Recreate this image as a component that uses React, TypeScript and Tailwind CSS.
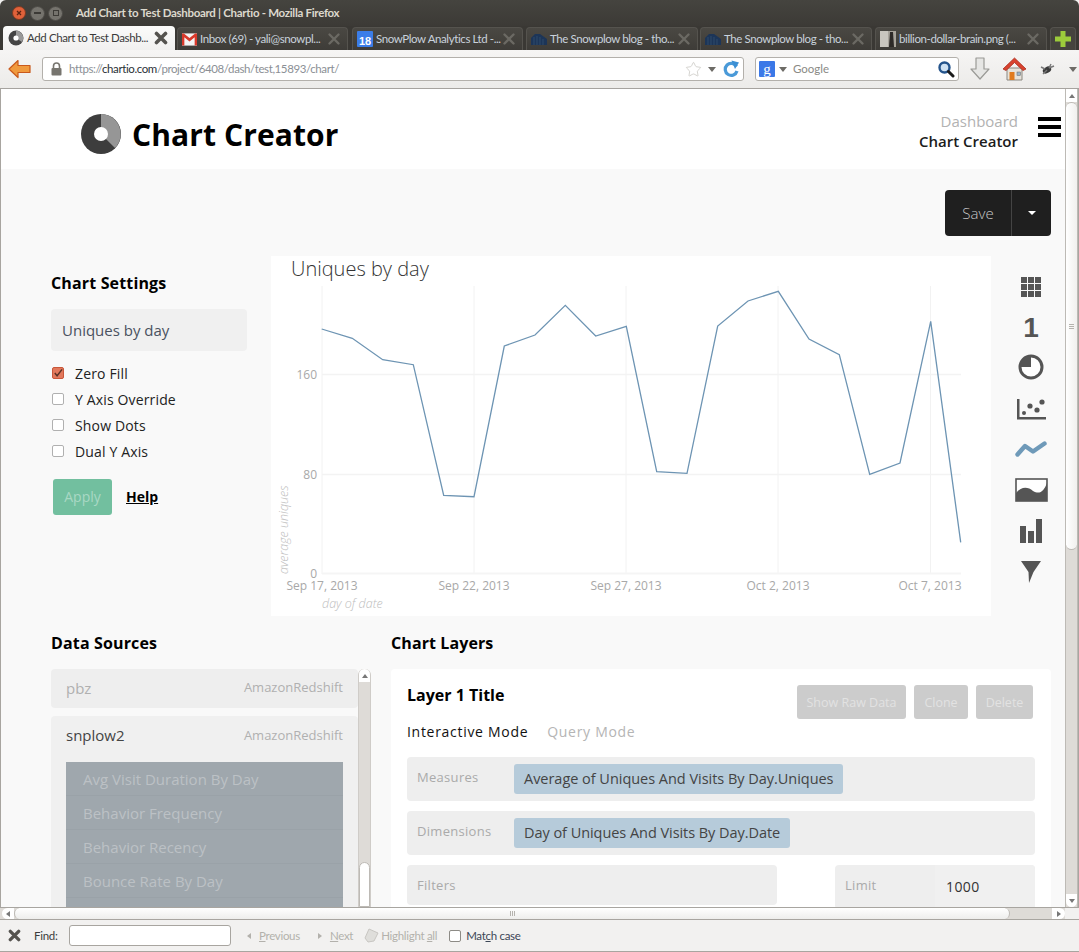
import { Star } from "lucide-react";

const points = [
  [321.7, 329], [352.3, 338.3], [382.7, 359.7], [413.3, 364.7], [443.7, 495.3], [474, 496.7],
  [504.3, 346], [535, 335], [565.3, 305.3], [595.7, 336], [626.3, 326.3], [656.7, 471.7],
  [687, 473.3], [717.7, 326], [748, 301], [778.3, 291.3], [809, 339], [839.3, 354.7],
  [869.7, 474.3], [900, 463], [930.7, 321.3], [960.7, 542.3],
];

function CloseX({ dark }: { dark?: boolean }) {
  return (
    <svg width="14" height="14" viewBox="0 0 14 14" className="shrink-0">
      <path d="M2.5 2.5 L11.5 11.5 M11.5 2.5 L2.5 11.5" stroke={dark ? "#55534f" : "#6b6963"} strokeWidth={dark ? 3.6 : 2.4} strokeLinecap="round" />
    </svg>
  );
}

function ChartioFavicon() {
  return (
    <svg width="16" height="16" viewBox="0 0 16 16" className="shrink-0">
      <circle cx="8" cy="8" r="7.5" fill="#444" />
      <path d="M8 8 L8 .5 A7.5 7.5 0 0 1 14 12 Z" fill="#999" />
      <circle cx="8" cy="8" r="2.6" fill="#fff" />
    </svg>
  );
}

function GmailIcon() {
  return (
    <svg width="15" height="13" viewBox="0 0 16 13" className="shrink-0">
      <rect width="16" height="13" fill="#f4f4f4" />
      <path d="M0 0 H2 L8 5 L14 0 H16 V13 H13.5 V4 L8 8.5 L2.5 4 V13 H0 Z" fill="#d8392b" />
    </svg>
  );
}

function CalendarIcon() {
  return (
    <div className="shrink-0 w-[16px] h-[16px] bg-[#3b7de8] flex items-end justify-center rounded-[1px]">
      <span className="text-[11px] leading-[12px] font-bold text-white font-['Liberation_Sans',sans-serif]">18</span>
    </div>
  );
}

function BlogIcon() {
  return (
    <svg width="16" height="12" viewBox="0 0 16 12" className="shrink-0">
      <path d="M0 12 V5 L4 1 H9 L16 6 V12 Z" fill="#1c3558" />
      <path d="M3 4 V12 M6 3 V12 M9 4 V12 M12 6 V12" stroke="#35506f" strokeWidth="0.8" />
    </svg>
  );
}

function PhotoIcon() {
  return (
    <svg width="16" height="16" viewBox="0 0 16 16" className="shrink-0">
      <rect width="16" height="16" fill="#a8a49c" />
      <rect x="0" y="0" width="8" height="16" fill="#c9c6bf" />
      <path d="M10 1 H13 L14 16 H9 Z" fill="#2d2a28" />
    </svg>
  );
}

function Tab({ w, text, icon, active, gap }: { w: string; text: string; icon: React.ReactNode; active?: boolean; gap?: string }) {
  return (
    <div className={active
      ? `${w} ${gap} h-[24px] shrink-0 flex items-center gap-[3px] pl-[5px] pr-[7px] rounded-t-[4px] bg-linear-to-b from-[#fbfbfa] to-[#f1f0ef] text-[#3a3a3a]`
      : `${w} ${gap} h-[23px] shrink-0 flex items-center gap-[3px] pl-[4px] pr-[6px] rounded-t-[4px] border border-b-0 border-[#55534e] bg-linear-to-b from-[#4a4843] to-[#3e3c38] text-[#c9d2dc]`}>
      {icon}
      <span className="flex-1 min-w-0 whitespace-nowrap text-[11.5px] tracking-[-0.4px] leading-[16px]">{text}</span>
      <CloseX dark={active} />
    </div>
  );
}

function BrowserChrome() {
  return (
    <div className="shrink-0 font-['Lato',sans-serif]">
      <div className="h-[26px] bg-linear-to-b from-[#45443f] to-[#3c3a36] flex items-center pl-[12px] rounded-t-[6px]">
        <div className="w-[14px] h-[14px] rounded-full bg-[#e0613a] border border-[#7b3a22] flex items-center justify-center mr-[4px]">
          <svg width="6" height="6" viewBox="0 0 6 6"><path d="M1 1 L5 5 M5 1 L1 5" stroke="#5a2412" strokeWidth="1.3" /></svg>
        </div>
        <div className="w-[15px] h-[15px] rounded-full bg-[#75736d] border border-[#4c4a46] flex items-center justify-center mr-[3px]">
          <div className="w-[7px] h-[1.5px] bg-[#3c3a36]" />
        </div>
        <div className="w-[15px] h-[15px] rounded-full bg-[#75736d] border border-[#4c4a46] flex items-center justify-center">
          <div className="w-[6px] h-[6px] border border-[#3c3a36]" />
        </div>
        <span className="ml-[13px] text-[11.5px] tracking-[-0.3px] font-bold text-[#dcd8cd] whitespace-nowrap">Add Chart to Test Dashboard | Chartio - Mozilla Firefox</span>
      </div>
      <div className="h-[24px] bg-[#3a3834] flex items-end pl-[3px]">
        <Tab w="w-[172px]" text="Add Chart to Test Dashb..." icon={<ChartioFavicon />} active />
        <Tab w="w-[171px]" gap="ml-[2px]" text="Inbox (69) - yali@snowpl..." icon={<GmailIcon />} />
        <Tab w="w-[171px]" gap="ml-[4px]" text="SnowPlow Analytics Ltd -..." icon={<CalendarIcon />} />
        <Tab w="w-[172px]" gap="ml-[3px]" text="The Snowplow blog - tho..." icon={<BlogIcon />} />
        <Tab w="w-[172px]" gap="ml-[2px]" text="The Snowplow blog - tho..." icon={<BlogIcon />} />
        <Tab w="w-[172px]" gap="ml-[3px]" text="billion-dollar-brain.png (..." icon={<PhotoIcon />} />
        <div className="ml-[3px] w-[26px] h-[23px] shrink-0 rounded-t-[4px] border border-b-0 border-[#55534e] bg-[#45433e] flex items-center justify-center">
          <svg width="16" height="16" viewBox="0 0 16 16"><path d="M5.5 0 H10.5 V5.5 H16 V10.5 H10.5 V16 H5.5 V10.5 H0 V5.5 H5.5 Z" fill="#9ccb3b" /></svg>
        </div>
      </div>
      <div className="h-[39px] bg-linear-to-b from-[#f6f5f4] to-[#ecebe9] border-b border-[#a6a39f] flex items-center pl-[8px]">
        <svg width="23" height="20" viewBox="0 0 23 20" className="shrink-0">
          <path d="M10 1.5 L1 10 L10 18.5 V13.5 H22 V6.5 H10 Z" fill="#f09a3e" stroke="#c9591c" strokeWidth="1.2" strokeLinejoin="round" />
        </svg>
        <div className="ml-[11px] w-[702px] h-[24px] shrink-0 bg-white border border-[#b3b0ab] rounded-[3px] flex items-center pl-[7px] pr-[3px]">
          <svg width="13" height="14" viewBox="0 0 13 14" className="shrink-0">
            <path d="M3.5 6 V4 a3 3 0 0 1 6 0 V6" fill="none" stroke="#77756f" strokeWidth="1.6" />
            <rect x="1.5" y="6" width="10" height="7.5" rx="1" fill="#77756f" />
          </svg>
          <span className="ml-[6px] text-[11.5px] tracking-[-0.4px] whitespace-nowrap text-[#8b8f95]">https://<span className="text-[#2a2f36]">chartio.com</span>/project/6408/dash/test,15893/chart/</span>
          <Star size={17} strokeWidth={1} className="ml-auto text-[#c4c2bd]" />
          <div className="ml-[6px] w-0 h-0 border-x-[4px] border-x-transparent border-t-[5px] border-t-[#6d6b66]" />
          <svg width="18" height="18" viewBox="0 0 18 18" className="ml-[6px] shrink-0">
            <path d="M14.5 6.5 A6 6 0 1 0 15 11" fill="none" stroke="#4a9ad8" strokeWidth="3.2" />
            <path d="M9.5 0.5 L17 2.5 L13 9 Z" fill="#3b8fd4" />
          </svg>
        </div>
        <div className="ml-[11px] w-[204px] h-[24px] shrink-0 bg-white border border-[#b3b0ab] rounded-[3px] flex items-center pl-[3px] pr-[3px]">
          <div className="w-[16px] h-[16px] bg-[#3b78e7] rounded-[1px] flex items-center justify-center shrink-0">
            <span className="text-[15px] leading-[16px] text-white font-['Liberation_Serif',serif]">g</span>
          </div>
          <div className="ml-[4px] w-0 h-0 border-x-[4px] border-x-transparent border-t-[5px] border-t-[#6d6b66]" />
          <span className="ml-[6px] text-[11.5px] text-[#8a8a85]">Google</span>
          <svg width="18" height="18" viewBox="0 0 18 18" className="ml-auto shrink-0">
            <circle cx="7.5" cy="7.5" r="5" fill="#cfe2f3" stroke="#24548c" strokeWidth="2.4" />
            <path d="M11.5 11.5 L16 16" stroke="#1b1b1b" strokeWidth="3" strokeLinecap="round" />
          </svg>
        </div>
        <svg width="20" height="24" viewBox="0 0 20 24" className="ml-[11px] shrink-0">
          <path d="M6 1 H14 V12 H19 L10 22 L1 12 H6 Z" fill="#e6e6e4" stroke="#9a9a96" strokeWidth="1.2" strokeLinejoin="round" />
        </svg>
        <svg width="25" height="24" viewBox="0 0 25 24" className="ml-[12px] shrink-0">
          <path d="M5 11 V23 H20 V11 Z" fill="#e7e3da" stroke="#8a8780" />
          <path d="M1 12 L12.5 1 L24 12 L21 13.5 L12.5 5.5 L4 13.5 Z" fill="#d9432f" stroke="#a82b1c" strokeWidth="0.8" />
          <rect x="7.5" y="15" width="5" height="8" fill="#e07b1e" />
          <rect x="15" y="15" width="3.5" height="3.5" fill="#9bb5c9" stroke="#666" strokeWidth="0.5" />
        </svg>
        <svg width="18" height="14" viewBox="0 0 18 14" className="ml-[12px] shrink-0">
          <ellipse cx="8" cy="8" rx="4.5" ry="3" fill="#3b3b3b" transform="rotate(-30 8 8)" />
          <path d="M2 5 L6 7 M4 12 L8 8 M12 2 L10 6 M15 4 L10 6" stroke="#777" strokeWidth="1.4" />
        </svg>
        <div className="ml-[12px] w-0 h-0 border-x-[4px] border-x-transparent border-t-[5px] border-t-[#6d6b66]" />
      </div>
    </div>
  );
}

function Header() {
  return (
    <div className="h-[80px] shrink-0 bg-white flex items-center pt-[10px] pl-[80px] pr-[4px]">
      <svg width="40" height="40" viewBox="0 0 40 40" className="shrink-0">
        <circle cx="20" cy="20" r="20" fill="#3d3d3d" />
        <path d="M20 20 L20 0 A20 20 0 0 1 34 34 Z" fill="#969696" />
        <circle cx="20" cy="20" r="7" fill="#fff" />
      </svg>
      <h1 className="ml-[11px] mt-[2px] text-[30px] leading-[40px] tracking-[0.1px] font-bold text-black whitespace-nowrap">Chart Creator</h1>
      <div className="ml-auto text-right text-[15px] leading-[20px] mt-[-6px]">
        <div className="text-[#b2b2b2]">Dashboard</div>
        <div className="font-semibold text-[#1c1c1c]">Chart Creator</div>
      </div>
      <div className="ml-[20px] w-[23px] mb-[14px] flex flex-col gap-[4px]">
        <div className="h-[4px] bg-black" />
        <div className="h-[4px] bg-black" />
        <div className="h-[4px] bg-black" />
      </div>
    </div>
  );
}

function CheckRow({ label, checked }: { label: string; checked?: boolean }) {
  return (
    <div className="h-[26px] flex items-center">
      <div className={checked
        ? "ml-[1px] w-[12px] h-[12px] rounded-[2px] bg-[#e2785c] border border-[#c9573a] flex items-center justify-center"
        : "ml-[1px] w-[12px] h-[12px] rounded-[2px] bg-white border border-[#b0b0b0]"}>
        {checked && (
          <svg width="11" height="10" viewBox="0 0 11 10"><path d="M2 5 L4.5 8 L10 1" fill="none" stroke="#5b3227" strokeWidth="1.6" /></svg>
        )}
      </div>
      <span className="ml-[11px] text-[14px] tracking-[0.15px] text-[#222]">{label}</span>
    </div>
  );
}

function ChartSettings() {
  return (
    <div className="w-[220px] shrink-0 pt-[15px]">
      <h2 className="text-[16px] leading-[24px] tracking-[0.15px] font-bold text-black">Chart Settings</h2>
      <div className="mt-[14px] w-[196px] h-[42px] rounded-[4px] bg-[#f0f0f0] flex items-center pl-[11px] text-[15px] text-[#4a5260]">Uniques by day</div>
      <div className="mt-[9px]">
        <CheckRow label="Zero Fill" checked />
        <CheckRow label="Y Axis Override" />
        <CheckRow label="Show Dots" />
        <CheckRow label="Dual Y Axis" />
      </div>
      <div className="mt-[15px] ml-[2px] flex items-center">
        <div className="w-[59px] h-[36px] rounded-[3px] bg-[#72bf9f] flex items-center justify-center pb-[1px] text-[14px] text-[#a9d8c4]">Apply</div>
        <span className="ml-[14px] mb-[2px] text-[14px] font-bold text-black underline">Help</span>
      </div>
    </div>
  );
}

function LineChart() {
  const xLabels: [number, string][] = [[322, "Sep 17, 2013"], [474, "Sep 22, 2013"], [626, "Sep 27, 2013"], [778, "Oct 2, 2013"], [930, "Oct 7, 2013"]];
  return (
    <div className="w-[720px] h-[360px] shrink-0 bg-white">
      <svg width="720" height="360" viewBox="271 256 720 360" className="block font-['Open_Sans',sans-serif]">
        <text x="291" y="276" fontSize="20" fontWeight="300" fill="#333">Uniques by day</text>
        {[322, 474, 626, 778, 930.5].map((x) => (
          <line key={x} x1={x} x2={x} y1="286" y2="574" stroke="#f2f2f2" />
        ))}
        {[374.5, 474.5].map((y) => (
          <line key={y} x1="322" x2="961" y1={y} y2={y} stroke="#f3f3f3" strokeWidth="1.4" />
        ))}
        <line x1="322" x2="961" y1="573.5" y2="573.5" stroke="#f5f5f5" strokeWidth="2" />
        <polyline points={points.map((p) => p.join(",")).join(" ")} fill="none" stroke="#6d94b3" strokeWidth="1.3" />
        <g fontSize="12" fill="#a8a8a8">
          <text x="317" y="379" textAnchor="end">160</text>
          <text x="317" y="479" textAnchor="end">80</text>
          <text x="317" y="578" textAnchor="end">0</text>
          {xLabels.map(([x, t]) => (
            <text key={t} x={x} y="590" textAnchor="middle">{t}</text>
          ))}
        </g>
        <g fontSize="12.5" fontStyle="italic" fontWeight="300" fill="#bdbdbd">
          <text x="322" y="608">day of date</text>
          <text transform="translate(288 574) rotate(-90)">average uniques</text>
        </g>
      </svg>
    </div>
  );
}

function ChartTypeIcons() {
  const row = "h-[40.7px] flex items-center justify-center";
  const grey = "#555";
  return (
    <div className="w-[80px] shrink-0 pt-[11px]">
      <div className={row}>
        <svg width="20" height="20" viewBox="0 0 20 20" fill={grey}>
          {[0, 7, 14].flatMap((y) => [0, 7, 14].map((x) => <rect key={`${x}-${y}`} x={x} y={y} width="6" height="6" />))}
        </svg>
      </div>
      <div className={row}>
        <span className="text-[28px] leading-[28px] font-bold font-['Liberation_Sans',sans-serif] text-[#555]">1</span>
      </div>
      <div className={row}>
        <svg width="26" height="26" viewBox="0 0 26 26" className="mb-[3px]">
          <circle cx="13" cy="13" r="11" fill="#fff" stroke={grey} strokeWidth="3" />
          <path d="M13 13 V2 A11 11 0 0 0 2 13 Z" fill={grey} />
        </svg>
      </div>
      <div className={row}>
        <svg width="29" height="21" viewBox="0 0 29 21" fill={grey}>
          <path d="M0 0 H2.5 V18 H29 V20.5 H0 Z" />
          <circle cx="7" cy="14" r="2" /><circle cx="13" cy="7" r="2.6" /><circle cx="20" cy="11" r="2.6" /><circle cx="25" cy="3" r="2.6" />
        </svg>
      </div>
      <div className={row}>
        <svg width="32" height="18" viewBox="0 0 32 18" className="mb-[2px]">
          <path d="M2.5 14.5 L10 6 L18 11.5 L29.5 3.5" fill="none" stroke="#6f9ab9" strokeWidth="4.4" strokeLinecap="round" strokeLinejoin="round" />
        </svg>
      </div>
      <div className={row}>
        <svg width="33" height="24" viewBox="0 0 33 24" className="mb-[2px]">
          <rect x="1" y="1" width="31" height="22" fill="#fff" stroke={grey} strokeWidth="1.6" />
          <path d="M1 15 C7 8 13 9 18 13 C25 17 29 13 32 5 V23 H1 Z" fill={grey} />
        </svg>
      </div>
      <div className={row}>
        <svg width="22" height="24" viewBox="0 0 22 24" fill={grey}>
          <rect x="0" y="7" width="6" height="17" /><rect x="8" y="12" width="6" height="12" /><rect x="16" y="0" width="6" height="24" />
        </svg>
      </div>
      <div className={row}>
        <svg width="20" height="22" viewBox="0 0 20 22" fill={grey}>
          <path d="M0 0 H20 L12.5 11 L8 22 L7.5 11 Z" />
        </svg>
      </div>
    </div>
  );
}

function DataSources() {
  const tables = ["Avg Visit Duration By Day", "Behavior Frequency", "Behavior Recency", "Bounce Rate By Day"];
  return (
    <div className="w-[320px] shrink-0">
      <h2 className="h-[27px] text-[16px] leading-[27px] tracking-[0.15px] font-bold text-black">Data Sources</h2>
      <div className="mt-[12px] flex">
        <div className="w-[307px] shrink-0">
          <div className="h-[39px] rounded-[4px] bg-[#eeeeee] flex items-center justify-between px-[15px] pb-[1px]">
            <span className="text-[15px] text-[#b0b0b0]">pbz</span>
            <span className="text-[13px] text-[#b0b0b0]">AmazonRedshift</span>
          </div>
          <div className="mt-[8px] rounded-t-[4px] bg-[#f0f0f0] px-[15px]">
            <div className="h-[40px] flex items-center justify-between">
              <span className="text-[15px] text-[#444] pb-[1px]">snplow2</span>
              <span className="text-[13px] text-[#b0b0b0]">AmazonRedshift</span>
            </div>
            <div className="mt-[6px] h-[200px] bg-[#9fa7ad]">
              {tables.map((t) => (
                <div key={t} className="h-[34px] flex items-center pl-[17px] pt-[2px] text-[15px] text-[#bcc1c5] border-b border-[#9aa2a8]">{t}</div>
              ))}
            </div>
          </div>
        </div>
        <div className="w-[13px] shrink-0 h-[238px] flex flex-col border-x border-[#cfccc8] rounded-t-[6px] bg-[#dedbd7]">
          <div className="h-[13px] shrink-0 bg-white rounded-t-[6px] flex items-center justify-center">
            <div className="w-0 h-0 border-x-[3px] border-x-transparent border-b-[4px] border-b-[#777]" />
          </div>
          <div className="h-[180px] shrink-0" />
          <div className="flex-1 bg-white border border-[#bdbab5] rounded-t-[6px]" />
        </div>
      </div>
    </div>
  );
}

function RowLabel({ children }: { children: React.ReactNode }) {
  return <span className="w-[107px] shrink-0 pl-[10px] pb-[2px] text-[13px] tracking-[0.3px] text-[#aaaaaa]">{children}</span>;
}

function GhostButton({ w, children }: { w: string; children: React.ReactNode }) {
  return <div className={`${w} h-[34px] rounded-[3px] bg-[#cccccc] flex items-center justify-center pt-[3px] text-[12.5px] text-[#e2e2e2]`}>{children}</div>;
}

function ChartLayers() {
  return (
    <div className="w-[660px] shrink-0 ml-[20px]">
      <h2 className="h-[27px] text-[16px] leading-[27px] tracking-[0.1px] font-bold text-black">Chart Layers</h2>
      <div className="mt-[12px] h-[260px] rounded-t-[4px] bg-white px-[16px] pt-[16px]">
        <div className="flex items-start h-[34px]">
          <h3 className="text-[16px] leading-[20px] font-bold text-black">Layer 1 Title</h3>
          <div className="ml-auto mr-[2px] flex gap-[8px]">
            <GhostButton w="w-[109px]">Show Raw Data</GhostButton>
            <GhostButton w="w-[54px]">Clone</GhostButton>
            <GhostButton w="w-[57px]">Delete</GhostButton>
          </div>
        </div>
        <div className="mt-[2px] h-[20px] flex items-center text-[14px] tracking-[0.7px]">
          <span className="text-[#111]">Interactive Mode</span>
          <span className="ml-[19px] text-[#b5b5b5]">Query Mode</span>
        </div>
        <div className="mt-[16px] w-[628px] h-[44px] rounded-[4px] bg-[#eeeeee] flex items-center">
          <RowLabel>Measures</RowLabel>
          <div className="h-[30px] rounded-[3px] bg-[#b6cbda] flex items-center px-[10px] pb-[1px] text-[14.5px] tracking-[-0.03px] text-[#444]">Average of Uniques And Visits By Day.Uniques</div>
        </div>
        <div className="mt-[10px] w-[628px] h-[44px] rounded-[4px] bg-[#eeeeee] flex items-center">
          <RowLabel>Dimensions</RowLabel>
          <div className="h-[30px] rounded-[3px] bg-[#b6cbda] flex items-center px-[10px] pb-[1px] text-[14.5px] tracking-[-0.05px] text-[#444]">Day of Uniques And Visits By Day.Date</div>
        </div>
        <div className="mt-[10px] w-[628px] flex justify-between">
          <div className="w-[370px] h-[40px] rounded-[4px] bg-[#eeeeee] flex items-center pt-[4px]">
            <RowLabel>Filters</RowLabel>
          </div>
          <div className="w-[200px] h-[44px] rounded-[4px] bg-[#eeeeee] flex items-center">
            <span className="w-[100px] shrink-0 pl-[10px] pb-[2px] text-[13px] tracking-[0.3px] text-[#aaaaaa]">Limit</span>
            <div className="flex-1 h-full flex items-center pl-[11px] pb-[2px] bg-[#f0f0f0] rounded-r-[4px] text-[14px] tracking-[0.4px] text-[#333]">1000</div>
          </div>
        </div>
      </div>
    </div>
  );
}

function VerticalScrollbar() {
  return (
    <div className="w-[13px] shrink-0 flex flex-col border-x border-[#bdbab5] bg-[#dedbd7]">
      <div className="h-[13px] shrink-0 bg-white flex items-center justify-center">
        <div className="w-0 h-0 border-x-[3px] border-x-transparent border-b-[4px] border-b-[#777]" />
      </div>
      <div className="h-[448px] shrink-0 bg-linear-to-r from-[#ffffff] to-[#f1f0ee] border-y border-[#bdbab5] rounded-[6px] flex flex-col items-center justify-center gap-[1px]">
        <div className="w-[5px] h-px bg-[#b5b3ae]" />
        <div className="w-[5px] h-px bg-[#b5b3ae]" />
        <div className="w-[5px] h-px bg-[#b5b3ae]" />
      </div>
      <div className="flex-1" />
      <div className="h-[13px] shrink-0 bg-white flex items-center justify-center rounded-b-[6px]">
        <div className="w-0 h-0 border-x-[3px] border-x-transparent border-t-[4px] border-t-[#777]" />
      </div>
    </div>
  );
}

function HorizontalScrollbar() {
  return (
    <div className="h-[13px] shrink-0 flex border-y border-[#a8a5a0] bg-[#dedbd7] pl-[2px]">
      <div className="w-[12px] shrink-0 bg-white flex items-center justify-center rounded-l-[6px]">
        <div className="w-0 h-0 border-y-[3px] border-y-transparent border-r-[4px] border-r-[#777]" />
      </div>
      <div className="w-[996px] shrink-0 bg-linear-to-b from-[#ffffff] to-[#eeeeec] border-x border-[#bdbab5] rounded-[6px] flex items-center justify-center gap-[1px]">
        <div className="w-px h-[5px] bg-[#b5b3ae]" />
        <div className="w-px h-[5px] bg-[#b5b3ae]" />
        <div className="w-px h-[5px] bg-[#b5b3ae]" />
      </div>
      <div className="w-[42px] shrink-0" />
      <div className="w-[13px] shrink-0 bg-white flex items-center justify-center rounded-r-[6px]">
        <div className="w-0 h-0 border-y-[3px] border-y-transparent border-l-[4px] border-l-[#777]" />
      </div>
      <div className="flex-1 bg-[#f2f1f0]" />
    </div>
  );
}

function FindBar() {
  return (
    <div className="h-[32px] shrink-0 bg-[#f2f1f0] border-b border-[#a8a5a0] flex items-center pl-[8px] font-['Lato',sans-serif] text-[11.5px] tracking-[-0.3px] text-[#b3b1ac] whitespace-nowrap">
      <svg width="13" height="13" viewBox="0 0 14 14" className="shrink-0">
        <path d="M2.5 2.5 L11.5 11.5 M11.5 2.5 L2.5 11.5" stroke="#55534f" strokeWidth="3.6" strokeLinecap="round" />
      </svg>
      <span className="ml-[13px] w-[35px] text-[#3c3c3c]">Find:</span>
      <div className="w-[162px] h-[21px] bg-white border border-[#a8a5a0] rounded-[3px]" />
      <div className="ml-[16px] w-0 h-0 border-y-[3px] border-y-transparent border-r-[4px] border-r-[#b3b1ac]" />
      <span className="ml-[8px]"><span className="underline">P</span>revious</span>
      <div className="ml-[18px] w-0 h-0 border-y-[3px] border-y-transparent border-l-[4px] border-l-[#b3b1ac]" />
      <span className="ml-[8px]"><span className="underline">N</span>ext</span>
      <svg width="15" height="15" viewBox="0 0 15 15" className="ml-[11px] shrink-0">
        <path d="M5 1 L14 5 L10 13 L4 14 L1 10 Z" fill="#dfdedb" stroke="#c8c6c2" />
      </svg>
      <span className="ml-[2px]">Highlight <span className="underline">a</span>ll</span>
      <div className="ml-[12px] w-[12px] h-[12px] bg-white border border-[#8d8b86] rounded-[2px]" />
      <span className="ml-[5px] text-[#3c4656]">Mat<span className="underline">c</span>h case</span>
    </div>
  );
}

export default function App() {
  return (
    <div className="w-[1079px] h-[952px] flex flex-col overflow-hidden bg-[#f2f1f0] font-['Open_Sans',sans-serif]">
      <BrowserChrome />
      <div className="flex-1 min-h-0 flex border-l border-[#a8a5a0] border-r">
        <main className="w-[1064px] shrink-0 overflow-hidden bg-[#f9f9f9]">
          <Header />
          <div className="pt-[21px] pr-[14px] flex justify-end">
            <div className="w-[106px] h-[46px] rounded-[4px] bg-[#1f1f1f] flex">
              <div className="w-[67px] flex items-center justify-center text-[15px] font-light text-[#c8c8c8] border-r border-[#444]">Save</div>
              <div className="flex-1 flex items-center justify-center">
                <div className="w-0 h-0 border-x-[4px] border-x-transparent border-t-[4px] border-t-white" />
              </div>
            </div>
          </div>
          <div className="mt-[20px] pl-[50px] flex">
            <ChartSettings />
            <LineChart />
            <ChartTypeIcons />
          </div>
          <div className="mt-[14px] pl-[50px] flex">
            <DataSources />
            <ChartLayers />
          </div>
        </main>
        <VerticalScrollbar />
      </div>
      <HorizontalScrollbar />
      <FindBar />
    </div>
  );
}
